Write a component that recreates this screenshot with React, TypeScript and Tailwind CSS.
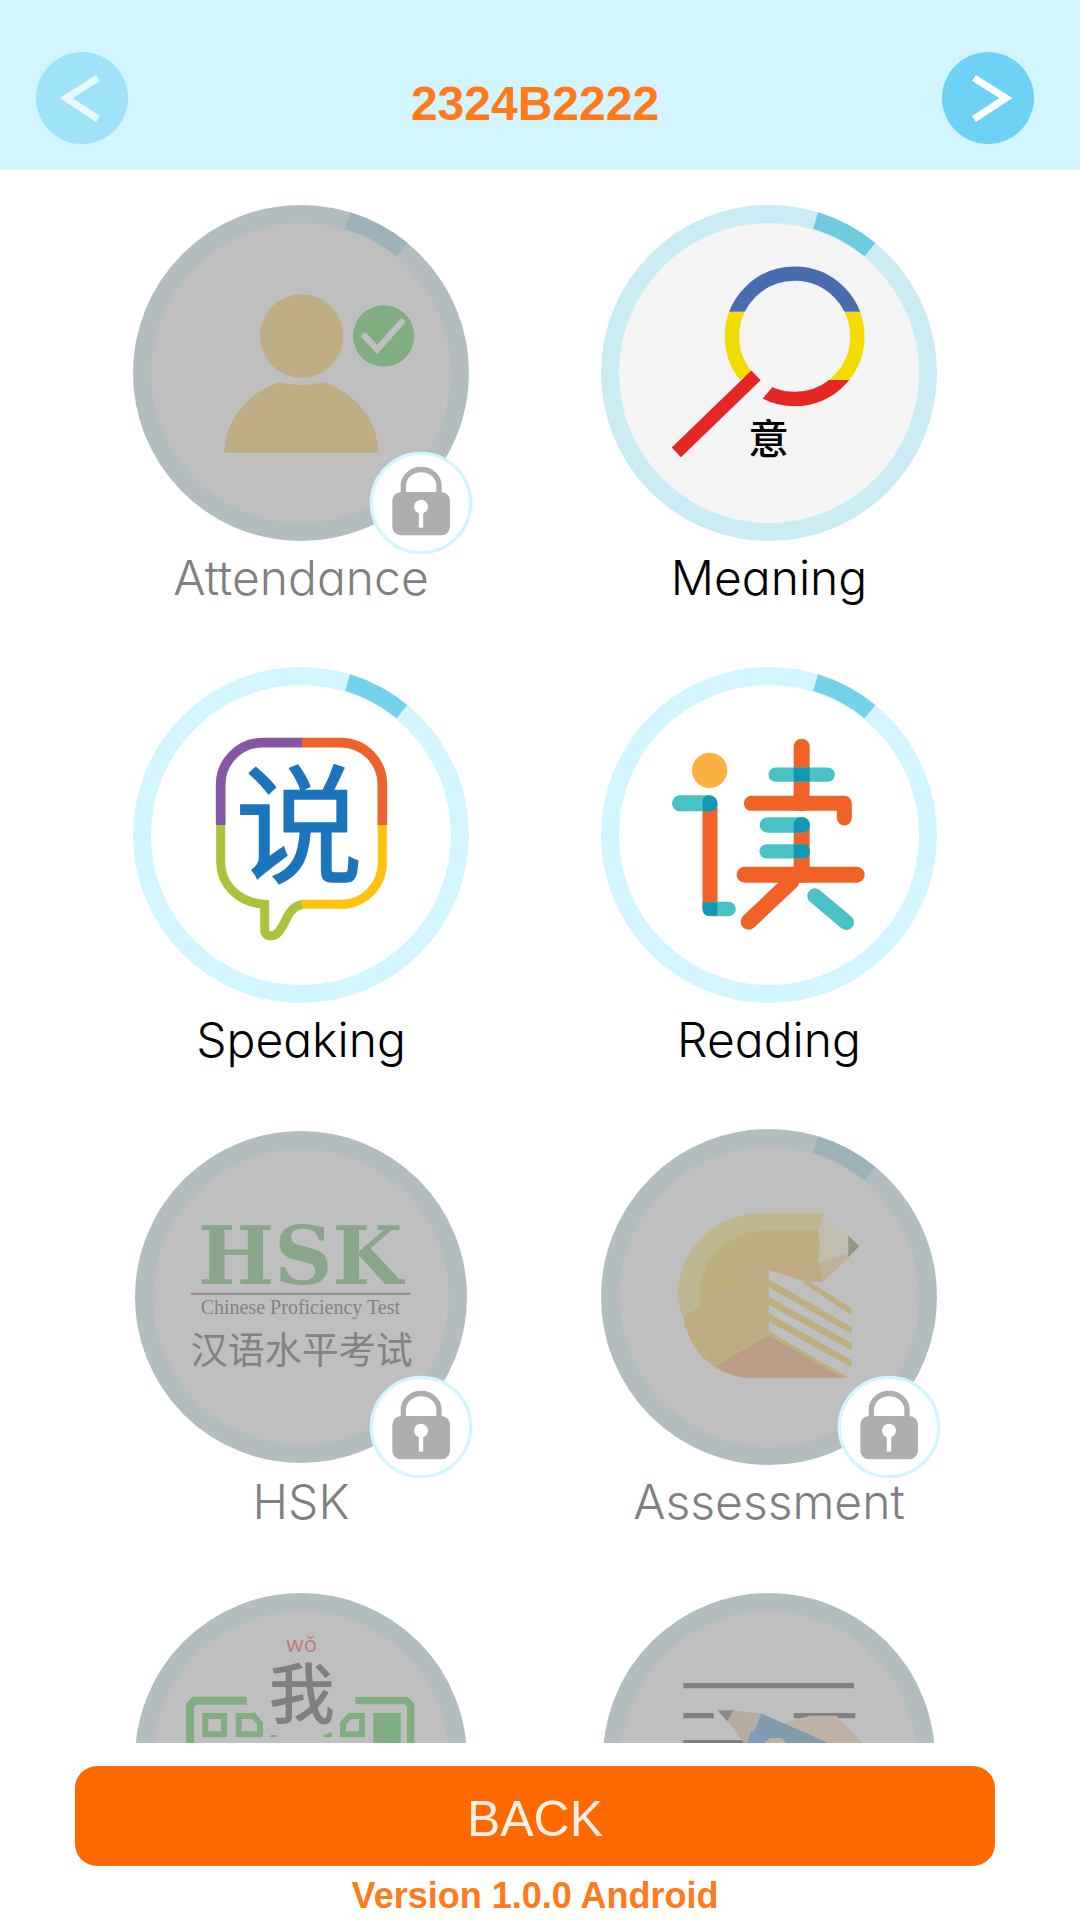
import type { ReactNode } from "react";

type Tone = "active" | "pressed" | "locked";

const TONES: Record<Tone, { fill: string; ring: string; arc: string; label: string }> = {
  active: { fill: "#ffffff", ring: "#d2f5ff", arc: "#74d3ea", label: "text-black" },
  pressed: { fill: "#f4f4f4", ring: "#cbecf5", arc: "#6fcce0", label: "text-black" },
  locked: { fill: "#bfbfbf", ring: "#b3bdc0", arc: "#9cb3ba", label: "text-[#808080]" },
};

const CJK = '"Noto Sans CJK SC", sans-serif';

function Lock() {
  return (
    <svg viewBox="747 785 312 312" className="absolute -right-1 -bottom-3.5 size-[104px]" aria-hidden="true">
      <circle cx="903" cy="941" r="149" fill="#fff" stroke="#d2f5ff" strokeWidth="10" />
      <path d="M850 915V888a53 47 0 0 1 107 0V915" fill="none" stroke="#aeaeae" strokeWidth="16" />
      <rect x="817" y="908" width="173" height="130" rx="26" fill="#aeaeae" />
      <circle cx="903" cy="952" r="21" fill="#fff" />
      <path d="M903 960V1015" stroke="#fff" strokeWidth="13" />
    </svg>
  );
}

function AttendanceArt() {
  return (
    <svg viewBox="39 45 1008 1008">
      <circle cx="545" cy="438" r="125" fill="#bfae83" />
      <path d="M313 788C316 690 380 610 478 577Q545 594 610 577C708 610 773 690 776 788Z" fill="#bfae83" />
      <circle cx="791" cy="438" r="92" fill="#80ae80" />
      <path d="M734 438L772 478L845 396" fill="none" stroke="#bfbfbf" strokeWidth="19" strokeLinecap="round" />
    </svg>
  );
}

function MeaningArt() {
  return (
    <svg viewBox="33 45 1008 1008">
      <defs>
        <clipPath id="lens-top">
          <rect x="380" y="200" width="460" height="165" />
        </clipPath>
        <clipPath id="lens-middle">
          <path d="M380 365H840V570H600V480L448 570H380Z" />
        </clipPath>
        <clipPath id="lens-bottom">
          <path d="M552 586L600 570H840V670H480Z" />
        </clipPath>
      </defs>
      <g fill="none" strokeWidth="43">
        <circle cx="614" cy="439" r="188" stroke="#496bb0" clipPath="url(#lens-top)" />
        <circle cx="614" cy="439" r="188" stroke="#f3dd00" clipPath="url(#lens-middle)" />
        <circle cx="614" cy="439" r="188" stroke="#e52726" clipPath="url(#lens-bottom)" />
        <path d="M259 787L498 556" stroke="#e52726" strokeWidth="40" />
      </g>
      <text x="536" y="791" textAnchor="middle" fontSize="122" fontWeight="500" fontFamily={CJK}>
        意
      </text>
    </svg>
  );
}

function SpeakingArt() {
  return (
    <svg viewBox="39 51 1008 1008">
      <g fill="none" strokeWidth="27">
        <path d="M302 526V405A126 126 0 0 1 428 278H546" stroke="#8756a3" strokeWidth="29" />
        <path d="M545 278H663A125 125 0 0 1 787 405V526" stroke="#ee632d" strokeWidth="29" />
        <path d="M787 525V636A125 125 0 0 1 663 763H544" stroke="#ffc20f" />
        <path
          d="M302 525V636C302 700 350 757 434 763V842C434 860 460 864 476 846C502 812 504 772 546 763"
          stroke="#a9c438"
        />
      </g>
      <text
        x="537"
        y="670"
        textAnchor="middle"
        fontSize="384"
        fontWeight="400"
        fontFamily={CJK}
        fill="#1c75bc"
        stroke="#1c75bc"
        strokeWidth="4"
        strokeLinejoin="round"
      >
        说
      </text>
    </svg>
  );
}

function ReadingArt() {
  return (
    <svg viewBox="33 51 1008 1008">
      <circle cx="359" cy="361" r="53" fill="#fbb042" />
      <g fill="none" stroke="#f16226" strokeWidth="48" strokeLinecap="round" strokeLinejoin="round">
        <path d="M635 290V460" />
        <path d="M484 460H763V504" strokeWidth="45" />
        <path d="M635 525V674" />
        <path d="M464 674H800" />
        <path d="M604 694L476 815" />
        <path d="M360 460V775" strokeWidth="45" />
      </g>
      <g fill="none" stroke="#48c2c5" strokeWidth="43" strokeLinecap="round">
        <path d="M557 374H713" />
        <path d="M270 460H358" strokeWidth="48" />
        <path d="M532 525H637" strokeWidth="46" />
        <path d="M530 604H637" />
        <path d="M361 777H416" />
        <path d="M675 738L769 817" strokeWidth="46" />
      </g>
      <g fill="#1298b2">
        <rect x="611" y="353" width="48" height="42" />
        <path d="M338 484V452Q341 436 358 436Q382 440 382 460Q382 480 366 484Z" />
        <path d="M611 548V520Q614 502 636 502Q659 506 659 525Q659 544 640 548Z" />
        <path d="M611 583H646Q659 586 659 604Q659 622 646 625H611Z" />
        <path d="M338 757H382V797H352Q338 794 338 777Z" />
      </g>
    </svg>
  );
}

function HskArt() {
  return (
    <svg viewBox="39 57 1008 1008">
      <text
        x="541"
        y="522"
        textAnchor="middle"
        fontSize="242"
        fontWeight="700"
        fontFamily='"DejaVu Serif", serif'
        fill="#87a788"
      >
        HSK
      </text>
      <path d="M213 551H872" stroke="#8c8c8c" strokeWidth="6" />
      <text
        x="541"
        y="612"
        textAnchor="middle"
        fontSize="60"
        fontFamily='"Liberation Serif", serif'
        fill="#838383"
      >
        Chinese Proficiency Test
      </text>
      <text x="545" y="761" textAnchor="middle" fontSize="111" fontFamily={CJK} fill="#828282">
        汉语水平考试
      </text>
    </svg>
  );
}

function AssessmentArt() {
  return (
    <svg viewBox="33 57 1008 1008">
      <path d="M702 309H520C370 309 264 420 264 560Q266 595 280 620L340 595L520 360H690Z" fill="#beb78f" />
      <path d="M688 360H540C410 360 328 450 328 560V595L440 530L520 458H688Z" fill="#bdb07e" />
      <path d="M690 458H510Q458 478 436 530L280 620C300 730 380 800 480 803H770L536 480L650 516H702Z" fill="#bfaa85" />
      <path d="M700 318L778 380L778 440L702 512L684 458L693 410L684 360Z" fill="#c1bdb0" />
      <path d="M684 458L778 430V442L702 512Z" fill="#bfb29c" />
      <path d="M775 377L808 409L775 441Z" fill="#969384" />
      <path d="M536 480L600 516H650L784 600V803H770L536 672Z" fill="#bfbfbf" />
      <g fill="none" stroke="#bdb07e" strokeWidth="20">
        <path d="M285 650L536 510" />
        <path d="M306 697L536 572" />
        <path d="M334 738L536 623" />
        <path d="M374 771L536 676" />
      </g>
      <g fill="#bdb07e">
        <path d="M636 516H660L784 594V616Z" />
        <path d="M536 508L784 650V672L536 532Z" />
        <path d="M536 560L784 699V721L536 584Z" />
        <path d="M536 610L784 750V772L536 634Z" />
        <path d="M536 662L776 803H740L536 688Z" />
      </g>
      <path d="M534 676L380 767Q420 800 470 803H756Z" fill="#bb9c87" />
    </svg>
  );
}

function WritingWordArt() {
  return (
    <svg viewBox="39 33 1008 1008">
      <g fill="none" stroke="#80ae80" strokeWidth="24">
        <path d="M210 560V376L224 362H380" />
        <path d="M706 362H858L872 376V560" strokeWidth="22" />
        <rect x="256" y="408" width="56" height="55" strokeWidth="18" />
        <path d="M400 408H356V463H420V430L396 402" strokeWidth="18" />
        <path d="M690 408H726V463H669V430L694 404" strokeWidth="18" />
      </g>
      <rect x="760" y="399" width="82" height="140" fill="#80ae80" />
      <path d="M452 465H470V472H452ZM610 466L635 456V472H612Z" fill="#80ae80" />
      <text x="545" y="216" textAnchor="middle" fontSize="66" fontFamily='"Noto Sans", sans-serif' fill="#bf7f7f">
        wǒ
      </text>
      <text x="545" y="413" textAnchor="middle" fontSize="198" fontWeight="500" fontFamily={CJK} fill="#808080">
        我
      </text>
    </svg>
  );
}

function ComposeArt() {
  return (
    <svg viewBox="33 33 1008 1008">
      <path
        d="M280 317H792M280 407H371M611 407H796M280 488H462"
        fill="none"
        stroke="#808080"
        strokeWidth="16"
      />
      <path d="M428 391L514 401L470 500L414 424Z" fill="#b7aca1" />
      <path d="M382 391H430L412 424Z" fill="#8a8a8a" />
      <path d="M578 430L660 407H740L820 492V520H700Z" fill="#beb1a6" />
      <path d="M514 400L710 487V520H466Z" fill="#809cac" />
      <path d="M484 452L540 476L510 520H460Z" fill="#7f9bba" />
      <path d="M520 492L540 474H576L590 492V520H520Z" fill="#beb1a6" />
    </svg>
  );
}

type Lesson = { name: string; tone: Tone; arc: boolean; lock: boolean; art: ReactNode };

const LESSONS: Lesson[] = [
  { name: "Attendance", tone: "locked", arc: true, lock: true, art: <AttendanceArt /> },
  { name: "Meaning", tone: "pressed", arc: true, lock: false, art: <MeaningArt /> },
  { name: "Speaking", tone: "active", arc: true, lock: false, art: <SpeakingArt /> },
  { name: "Reading", tone: "active", arc: true, lock: false, art: <ReadingArt /> },
  { name: "HSK", tone: "locked", arc: false, lock: true, art: <HskArt /> },
  { name: "Assessment", tone: "locked", arc: true, lock: true, art: <AssessmentArt /> },
  { name: "", tone: "locked", arc: false, lock: false, art: <WritingWordArt /> },
  { name: "", tone: "locked", arc: false, lock: false, art: <ComposeArt /> },
];

function LessonButton({ name, tone, arc, lock, art }: Lesson) {
  const t = TONES[tone];
  const r = arc ? 168 : 166;
  return (
    <button type="button" className="flex flex-col items-center">
      <span className="relative block size-[336px]">
        <svg viewBox="0 0 336 336" className="size-full" aria-hidden="true">
          <circle cx="168" cy="168" r={r - 1} fill={t.fill} />
          <circle cx="168" cy="168" r={r - 9} fill="none" stroke={t.ring} strokeWidth="18" />
          {arc && <path d="M214.6 15.5A159.5 159.5 0 0 1 269 44.6" fill="none" stroke={t.arc} strokeWidth="17" />}
          {art}
        </svg>
        {lock && <Lock />}
      </span>
      <span
        className={`h-[70px] font-['Inter'] text-[48px] leading-[74px] font-light [font-feature-settings:'cv11'] ${t.label}`}
      >
        {name}
      </span>
    </button>
  );
}

function ArrowButton({ label, disabled, d }: { label: string; disabled?: boolean; d: string }) {
  return (
    <button type="button" aria-label={label} disabled={disabled} className={disabled ? "opacity-50" : ""}>
      <svg viewBox="0 0 92 92" className="size-[92px]" aria-hidden="true">
        <circle cx="46" cy="46" r="46" fill="#6dd2f5" />
        <path d={d} fill="none" stroke="#fff" strokeWidth="7" />
      </svg>
    </button>
  );
}

export default function App() {
  return (
    <div className="flex h-screen flex-col bg-white">
      <header className="flex h-[170px] shrink-0 items-center justify-between bg-[#d2f5ff] pt-[26px] pr-[46px] pl-9">
        <ArrowButton label="Previous" disabled d="M62 26L30 46L62 67" />
        <h1 className="pt-3 font-['Liberation_Sans'] text-[48px] leading-none font-bold text-[#ff7a1a]">2324B2222</h1>
        <ArrowButton label="Next" d="M32 26L64 46L32 67" />
      </header>

      <main className="min-h-0 flex-1 overflow-hidden pt-[35px] pr-[77px] pl-[67px]">
        <div className="grid grid-cols-2 justify-items-center gap-y-14">
          {LESSONS.map((lesson, i) => (
            <LessonButton key={i} {...lesson} />
          ))}
        </div>
      </main>

      <footer className="flex h-[177px] shrink-0 flex-col items-center pt-[23px] pr-[85px] pl-[75px] font-['Liberation_Sans']">
        <button type="button" className="h-[100px] w-full rounded-[22px] bg-[#ff6900] pt-1.5 text-[50px] leading-none text-[#fff0e6]">
          BACK
        </button>
        <p className="pt-3 text-[36px] leading-9 font-bold text-[#ff7a1a]">Version 1.0.0 Android</p>
      </footer>
    </div>
  );
}
